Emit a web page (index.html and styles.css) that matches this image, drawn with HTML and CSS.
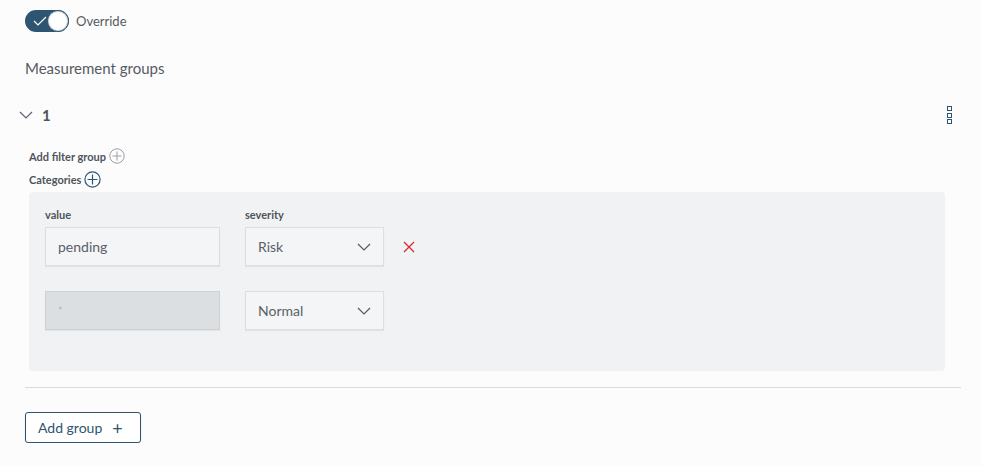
FILE: index.html
```html
<!DOCTYPE html>
<html>
<head>
<meta charset="utf-8">
<link rel="stylesheet" href="styles.css">
</head>
<body>
<div class="page">
  <div class="toggle-row">
    <span class="toggle">
      <svg class="toggle-check" width="14" height="10" viewBox="0 0 14 10"><path d="M1 5 L5 9 L13 1" fill="none" stroke="#ffffff" stroke-width="1.2"/></svg>
      <span class="knob"></span>
    </span>
    <span class="toggle-label">Override</span>
  </div>

  <h2 class="section-title">Measurement groups</h2>

  <div class="group-head">
    <svg class="chev" width="14" height="8" viewBox="0 0 14 8"><path d="M1 1 L7 7 L13 1" fill="none" stroke="#5a6470" stroke-width="1.2"/></svg>
    <span class="group-num">1</span>
    <span class="spacer"></span>
    <span class="kebab"><i></i><i></i><i></i></span>
  </div>

  <div class="group-body">
    <div class="add-line">
      <span class="small-bold">Add filter group</span>
      <svg width="16" height="16" viewBox="0 0 16 16"><circle cx="8" cy="8" r="7.2" fill="none" stroke="#9a9ea4" stroke-width="1"/><path d="M8 3.5 V12.5 M3.5 8 H12.5" stroke="#9a9ea4" stroke-width="1"/></svg>
    </div>
    <div class="add-line">
      <span class="small-bold">Categories</span>
      <svg width="17" height="17" viewBox="0 0 17 17"><circle cx="8.5" cy="8.5" r="7.6" fill="none" stroke="#2d5470" stroke-width="1.2"/><path d="M8.5 3.5 V13.5 M3.5 8.5 H13.5" stroke="#2d5470" stroke-width="1.2"/></svg>
    </div>

    <div class="panel">
      <div class="labels">
        <span class="lbl lbl-value">value</span>
        <span class="lbl">severity</span>
      </div>
      <div class="row">
        <div class="input">pending</div>
        <div class="select">
          <span>Risk</span>
          <svg width="14" height="8" viewBox="0 0 14 8"><path d="M1 1 L7 7 L13 1" fill="none" stroke="#555b62" stroke-width="1.2"/></svg>
        </div>
        <svg class="remove" width="12" height="12" viewBox="0 0 12 12"><path d="M1 1 L11 11 M11 1 L1 11" stroke="#d9282f" stroke-width="1.3"/></svg>
      </div>
      <div class="row">
        <div class="input disabled">*</div>
        <div class="select">
          <span>Normal</span>
          <svg width="14" height="8" viewBox="0 0 14 8"><path d="M1 1 L7 7 L13 1" fill="none" stroke="#555b62" stroke-width="1.2"/></svg>
        </div>
      </div>
    </div>
  </div>

  <hr class="divider">

  <button class="add-group">Add group <span class="plus">+</span></button>
</div>
</body>
</html>
```

FILE: styles.css
```css
html, body {
  margin: 0;
  padding: 0;
  background: #fcfcfd;
}
body {
  font-family: Lato, "Liberation Sans", sans-serif;
  color: #4f555b;
}
.page {
  padding: 10px 21px 0 25px;
}
.toggle-row {
  display: flex;
  align-items: center;
  gap: 7px;
  height: 22px;
}
.toggle {
  position: relative;
  display: inline-flex;
  align-items: center;
  width: 44px;
  height: 22px;
  border-radius: 11px;
  background: #2d5470;
  box-sizing: border-box;
}
.toggle-check {
  margin-left: 8px;
}
.knob {
  position: absolute;
  right: 0;
  top: 0;
  width: 22px;
  height: 22px;
  border-radius: 50%;
  background: #ffffff;
  border: 1px solid #2d5470;
  box-shadow: inset 0 0 0 1px #d4dbe1;
  box-sizing: border-box;
}
.toggle-label {
  font-size: 13px;
  color: #555b61;
}
.section-title {
  margin: 26px 0 0 0;
  font-size: 15px;
  font-weight: 400;
  line-height: 20px;
  color: #555b61;
}
.group-head {
  display: flex;
  align-items: center;
  height: 20px;
  margin: 27px 0 0 -6px;
}
.chev {
  margin-right: 9px;
}
.group-num {
  font-size: 15px;
  font-weight: 700;
  color: #4f555b;
}
.spacer {
  flex: 1;
}
.kebab {
  display: flex;
  flex-direction: column;
  gap: 1.5px;
  margin-right: 9px;
}
.kebab i {
  display: block;
  width: 5px;
  height: 5px;
  box-sizing: border-box;
  border: 1px solid #2d5470;
}
.group-body {
  padding: 0 0 0 4px;
}
.add-line {
  display: flex;
  align-items: center;
  gap: 3px;
  height: 18px;
}
.add-line:first-child {
  margin-top: 22px;
}
.add-line + .add-line {
  margin-top: 5px;
}
.small-bold {
  font-size: 11px;
  font-weight: 700;
  color: #4f555b;
}
.panel {
  margin-top: 4px;
  width: 916px;
  box-sizing: border-box;
  background: #f1f2f4;
  border-radius: 4px;
  padding: 15px 16px 41px 16px;
}
.labels {
  display: flex;
  height: 15px;
  align-items: center;
  margin-bottom: 5px;
}
.lbl {
  font-size: 11px;
  font-weight: 700;
  color: #4f555b;
}
.lbl-value {
  width: 200px;
}
.row {
  display: flex;
  align-items: center;
  gap: 25px;
}
.row + .row {
  margin-top: 25px;
}
.input, .select {
  height: 39px;
  box-sizing: border-box;
  border: 1px solid #dcdee2;
  background: #f4f5f6;
  box-shadow: 0 1px 1px rgba(0,0,0,0.06);
  font-size: 14px;
  color: #5a6067;
  display: flex;
  align-items: center;
  padding: 0 12px;
}
.input {
  width: 175px;
}
.input.disabled {
  background: #dcdfe2;
  color: #b3b7bb;
  font-size: 11px;
  border-color: #cfd2d5;
}
.select {
  width: 139px;
  justify-content: space-between;
}
.remove {
  margin-left: -6px;
}
.divider {
  margin: 16px 0 0 0;
  border: 0;
  border-top: 1px solid #d9dadc;
  height: 0;
}
.add-group {
  margin-top: 24px;
  height: 31px;
  width: 116px;
  box-sizing: border-box;
  border: 1px solid #2d5470;
  border-radius: 3px;
  background: #ffffff;
  color: #2d5470;
  font-family: Lato, "Liberation Sans", sans-serif;
  font-size: 14px;
  padding: 0 12px;
  display: flex;
  align-items: center;
  gap: 10px;
  box-shadow: 0 1px 2px rgba(0,0,0,0.12);
}
.plus {
  font-size: 18px;
  line-height: 1;
}
```
